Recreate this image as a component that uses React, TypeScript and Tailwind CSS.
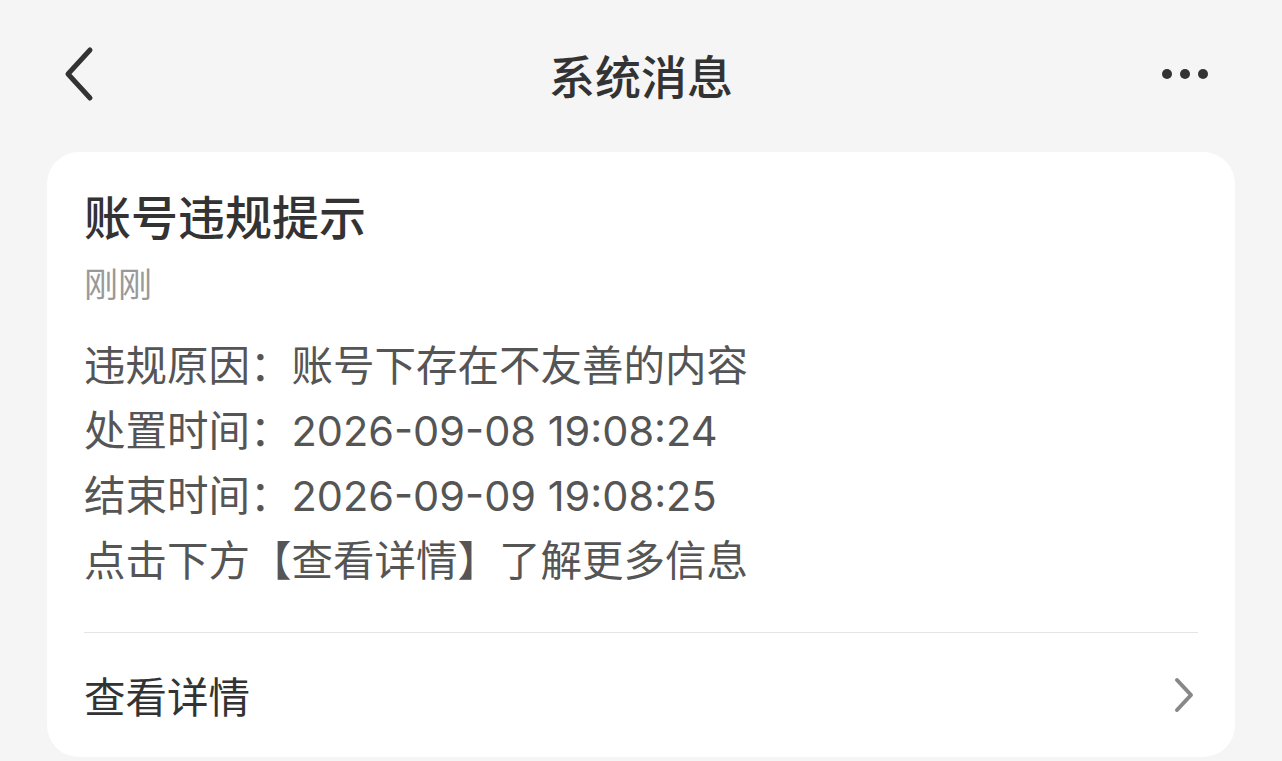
export default function App() {
  const font = { fontFamily: '"Noto Sans CJK SC", "Noto Sans", sans-serif' }
  const latin = { fontFamily: 'Inter, "Noto Sans CJK SC", sans-serif' }
  const lines = [
    '违规原因：账号下存在不友善的内容',
    '处置时间：2026-09-08 19:08:24',
    '结束时间：2026-09-09 19:08:25',
    '点击下方【查看详情】了解更多信息',
  ]

  return (
    <div className="min-h-[761px] w-full bg-[#f5f5f5]" style={font}>
      {/* Header */}
      <div className="relative flex h-[152px] items-center justify-center pb-[4px]">
        <button className="absolute left-[58px] top-[44px] flex h-[60px] w-[40px] items-center justify-center">
          <svg width="36" height="58" viewBox="0 0 36 58" fill="none">
            <path d="M30 5 L8 29 L30 53" stroke="#333333" strokeWidth="5" strokeLinecap="round" strokeLinejoin="round" />
          </svg>
        </button>
        <h1 className="text-[46px] font-medium leading-none text-[#333333]">系统消息</h1>
        <div className="absolute right-[74px] top-[69px] flex items-center gap-[8px]">
          <span className="h-[10px] w-[10px] rounded-full bg-[#333333]" />
          <span className="h-[10px] w-[10px] rounded-full bg-[#333333]" />
          <span className="h-[10px] w-[10px] rounded-full bg-[#333333]" />
        </div>
      </div>

      {/* Card */}
      <div className="mx-[47px] rounded-[32px] bg-white px-[37px] pt-[31px]">
        <h2 className="text-[47px] font-medium leading-[64px] text-[#333333]">账号违规提示</h2>
        <p className="mt-[12px] text-[34px] leading-[48px] text-[#999999]">刚刚</p>
        <div className="mt-[27px] text-[41.5px] leading-[65px] text-[#555555]" style={latin}>
          {lines.map((l) => (
            <p key={l}>{l}</p>
          ))}
        </div>
        <div className="mt-[38px] h-px bg-[#e5e5e5]" />
        <div className="flex h-[124px] items-center justify-between">
          <span className="text-[41.5px] text-[#333333]">查看详情</span>
          <svg width="24" height="36" viewBox="0 0 24 36" fill="none" className="mr-[2px]">
            <path d="M5 3 L19 18 L5 33" stroke="#888888" strokeWidth="4" strokeLinecap="round" strokeLinejoin="round" />
          </svg>
        </div>
      </div>
    </div>
  )
}
